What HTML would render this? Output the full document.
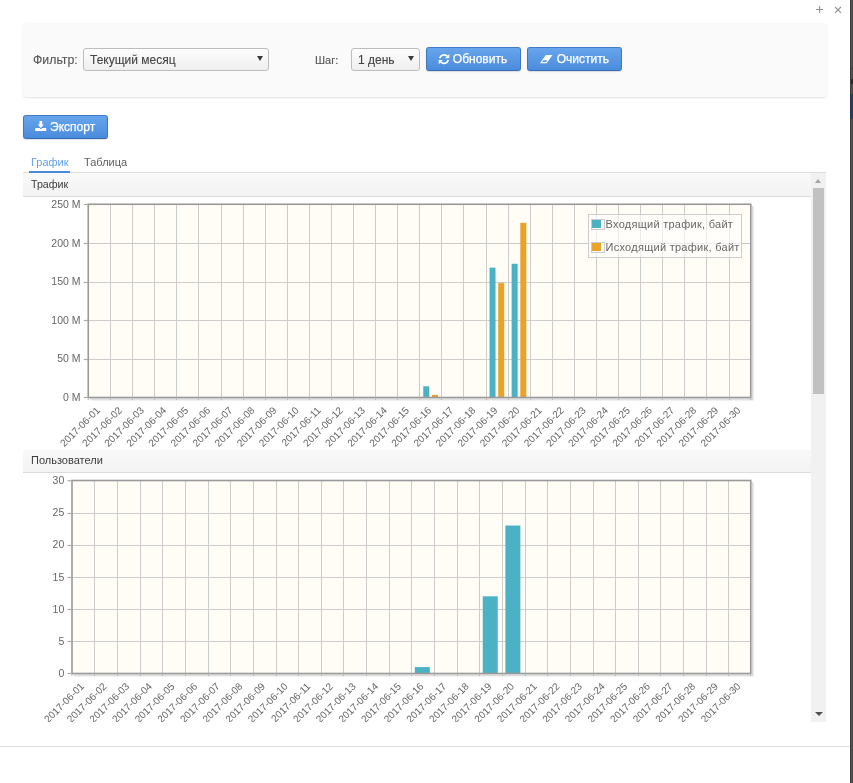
<!DOCTYPE html>
<html><head><meta charset="utf-8">
<style>
*{box-sizing:border-box;}
html,body{-webkit-font-smoothing:antialiased;margin:0;padding:0;width:853px;height:783px;overflow:hidden;background:#fff;font-family:"Liberation Sans",sans-serif;}
.abs{position:absolute;}
body>*{will-change:transform;}
#strip{position:absolute;left:850px;top:0;width:3px;height:783px;background:#4e4e4e;border-left:1px solid #3f3f3f;}
#strip2{position:absolute;left:850px;top:94px;width:3px;height:25px;background:#263c5a;}
#panel{position:absolute;left:23px;top:23px;width:804px;height:74px;background:#fafafa;border-radius:4px;box-shadow:0 1px 2px rgba(0,0,0,0.11);}
.lbl{position:absolute;font-size:12px;color:#555;white-space:nowrap;-webkit-text-stroke:0.12px #555;}
.sel{position:absolute;height:23px;border:1px solid #bdbdbd;border-radius:3px;background:linear-gradient(#fdfdfd,#efefef);font-size:12px;color:#444;}
.sel span{position:absolute;left:6px;top:4px;white-space:nowrap;-webkit-text-stroke:0.1px #444;}
.tri{position:absolute;width:0;height:0;border-left:3.2px solid transparent;border-right:3.2px solid transparent;border-top:5.2px solid #3a3a3a;}
.btn{position:absolute;height:24px;border:1px solid #3c7dd0;border-color:#3f7bc8 #3d76c2 #386cb6;border-radius:3px;background:linear-gradient(#67a6ec,#4a8bdc);color:#fff;font-size:12px;box-shadow:0 1px 1px rgba(0,0,0,0.12);}
.btn span{position:absolute;top:4px;white-space:nowrap;-webkit-text-stroke:0.25px #fff;}
.tab{position:absolute;font-size:11px;white-space:nowrap;}
.hdr{position:absolute;left:23px;width:788px;height:24px;background:linear-gradient(#f9f9f9,#f3f3f3);border-bottom:1px solid #dcdcdc;}
.hdr span{position:absolute;left:8px;top:5px;font-size:11px;color:#3c3c3c;white-space:nowrap;}
#strip3{position:absolute;left:850px;top:68px;width:3px;height:1px;background:#3d3d3d;}
#strip4{position:absolute;left:851px;top:79px;width:2px;height:5px;background:#2a2a2a;}
svg text{font-family:"Liberation Sans",sans-serif;}
</style></head><body>
<div id="strip"></div><div id="strip2"></div><div id="strip3"></div><div id="strip4"></div>
<svg class="abs" style="left:0;top:0" width="850" height="20">
<g stroke="#909090" stroke-width="1.05" fill="none">
<line x1="816" y1="9.5" x2="823.2" y2="9.5"/><line x1="819.6" y1="6" x2="819.6" y2="13"/>
<line x1="835" y1="7" x2="841" y2="12.8"/><line x1="841" y1="7" x2="835" y2="12.8"/>
</g></svg>
<div id="panel"></div>
<div class="lbl" style="left:33px;top:52.8px;font-size:12.3px;">Фильтр:</div>
<div class="sel" style="left:83px;top:48px;width:186px;"><span>Текущий месяц</span><div class="tri" style="left:173px;top:7.2px;"></div></div>
<div class="lbl" style="left:315px;top:54px;font-size:11px;">Шаг:</div>
<div class="sel" style="left:351px;top:48px;width:69px;"><span>1 день</span><div class="tri" style="left:56px;top:7.2px;"></div></div>
<div class="btn" style="left:426px;top:47px;width:95px;"><span style="left:25.8px">Обновить</span></div>
<div class="btn" style="left:527px;top:47px;width:95px;"><span style="left:28.7px">Очистить</span></div>
<div class="btn" style="left:23px;top:115px;width:85px;"><span style="left:26.1px">Экспорт</span></div>
<svg class="abs" style="left:0;top:0" width="853" height="140">
<g fill="none" stroke="#fff" stroke-width="1.7">
<path d="M439.7 58.2 A4.5 4.5 0 0 1 447.3 56.2"/>
<path d="M448.3 60.0 A4.5 4.5 0 0 1 440.7 62.0"/>
</g>
<g fill="#fff">
<polygon points="449.3,54 449.3,58.2 445.1,58.2"/>
<polygon points="438.7,64.2 438.7,60 442.9,60"/>
<polygon points="540,63.2 546.7,63.2 552.5,55 545.8,55"/>
<rect x="39.5" y="121" width="2.6" height="4"/>
<polygon points="37.7,124.4 43.9,124.4 40.8,128"/>
<path d="M35.2 128 H39.3 L40.8 129.3 L42.3 128 H46.2 V131 H35.2 Z"/>
</g>
<polygon points="542.2,62.0 546.1,62.0 547.3,60.3 543.4,60.3" fill="#5592e0"/>
</svg>
<div class="tab" style="left:31px;top:156px;color:#62a0e8;">График</div>
<div class="tab" style="left:84.2px;top:156px;color:#606060;">Таблица</div>
<div class="abs" style="left:23px;top:172px;width:803px;height:1px;background:#dddddd;"></div>
<div class="abs" style="left:29px;top:171px;width:41px;height:2px;background:#4a89dc;"></div>
<div class="abs" style="left:23px;top:173px;width:803px;height:549px;overflow:hidden;">
</div>
<div class="hdr" style="top:173px;"><span style="font-size:10.7px;top:5.3px">Трафик</span></div>
<div class="hdr" style="top:450px;height:23px;"><span style="top:3.6px">Пользователи</span></div>
<svg class="abs" style="left:0;top:0;" width="853" height="783">
<defs><clipPath id="cp"><rect x="23" y="173" width="788" height="549"/></clipPath></defs>
<g clip-path="url(#cp)">
<rect x="88.25" y="204.25" width="662.5" height="193.25" fill="#fffdf6"/>
<line x1="110.50" y1="204.25" x2="110.50" y2="397.5" stroke="#cccccc" stroke-width="1"/>
<line x1="132.50" y1="204.25" x2="132.50" y2="397.5" stroke="#cccccc" stroke-width="1"/>
<line x1="154.50" y1="204.25" x2="154.50" y2="397.5" stroke="#cccccc" stroke-width="1"/>
<line x1="176.50" y1="204.25" x2="176.50" y2="397.5" stroke="#cccccc" stroke-width="1"/>
<line x1="198.50" y1="204.25" x2="198.50" y2="397.5" stroke="#cccccc" stroke-width="1"/>
<line x1="221.50" y1="204.25" x2="221.50" y2="397.5" stroke="#cccccc" stroke-width="1"/>
<line x1="243.50" y1="204.25" x2="243.50" y2="397.5" stroke="#cccccc" stroke-width="1"/>
<line x1="265.50" y1="204.25" x2="265.50" y2="397.5" stroke="#cccccc" stroke-width="1"/>
<line x1="287.50" y1="204.25" x2="287.50" y2="397.5" stroke="#cccccc" stroke-width="1"/>
<line x1="309.50" y1="204.25" x2="309.50" y2="397.5" stroke="#cccccc" stroke-width="1"/>
<line x1="331.50" y1="204.25" x2="331.50" y2="397.5" stroke="#cccccc" stroke-width="1"/>
<line x1="353.50" y1="204.25" x2="353.50" y2="397.5" stroke="#cccccc" stroke-width="1"/>
<line x1="375.50" y1="204.25" x2="375.50" y2="397.5" stroke="#cccccc" stroke-width="1"/>
<line x1="397.50" y1="204.25" x2="397.50" y2="397.5" stroke="#cccccc" stroke-width="1"/>
<line x1="419.50" y1="204.25" x2="419.50" y2="397.5" stroke="#cccccc" stroke-width="1"/>
<line x1="441.50" y1="204.25" x2="441.50" y2="397.5" stroke="#cccccc" stroke-width="1"/>
<line x1="463.50" y1="204.25" x2="463.50" y2="397.5" stroke="#cccccc" stroke-width="1"/>
<line x1="486.50" y1="204.25" x2="486.50" y2="397.5" stroke="#cccccc" stroke-width="1"/>
<line x1="508.50" y1="204.25" x2="508.50" y2="397.5" stroke="#cccccc" stroke-width="1"/>
<line x1="530.50" y1="204.25" x2="530.50" y2="397.5" stroke="#cccccc" stroke-width="1"/>
<line x1="552.50" y1="204.25" x2="552.50" y2="397.5" stroke="#cccccc" stroke-width="1"/>
<line x1="574.50" y1="204.25" x2="574.50" y2="397.5" stroke="#cccccc" stroke-width="1"/>
<line x1="596.50" y1="204.25" x2="596.50" y2="397.5" stroke="#cccccc" stroke-width="1"/>
<line x1="618.50" y1="204.25" x2="618.50" y2="397.5" stroke="#cccccc" stroke-width="1"/>
<line x1="640.50" y1="204.25" x2="640.50" y2="397.5" stroke="#cccccc" stroke-width="1"/>
<line x1="662.50" y1="204.25" x2="662.50" y2="397.5" stroke="#cccccc" stroke-width="1"/>
<line x1="684.50" y1="204.25" x2="684.50" y2="397.5" stroke="#cccccc" stroke-width="1"/>
<line x1="706.50" y1="204.25" x2="706.50" y2="397.5" stroke="#cccccc" stroke-width="1"/>
<line x1="729.50" y1="204.25" x2="729.50" y2="397.5" stroke="#cccccc" stroke-width="1"/>
<line x1="88.25" y1="243.50" x2="750.75" y2="243.50" stroke="#cccccc" stroke-width="1"/>
<line x1="88.25" y1="282.50" x2="750.75" y2="282.50" stroke="#cccccc" stroke-width="1"/>
<line x1="88.25" y1="320.50" x2="750.75" y2="320.50" stroke="#cccccc" stroke-width="1"/>
<line x1="88.25" y1="359.50" x2="750.75" y2="359.50" stroke="#cccccc" stroke-width="1"/>
<rect x="423.26" y="386.29" width="6" height="11.21" fill="#4bb2c5"/>
<rect x="431.96" y="394.87" width="6" height="2.63" fill="#eaa228"/>
<rect x="489.53" y="267.64" width="6" height="129.86" fill="#4bb2c5"/>
<rect x="498.23" y="283.10" width="6" height="114.40" fill="#eaa228"/>
<rect x="511.62" y="263.77" width="6" height="133.73" fill="#4bb2c5"/>
<rect x="520.32" y="222.80" width="6" height="174.70" fill="#eaa228"/>
<polyline points="89.35,398.6 751.85,398.6 751.85,205.35" fill="none" stroke="rgba(0,0,0,0.07)" stroke-width="1.5"/>
<polyline points="90.05,399.3 752.55,399.3 752.55,206.05" fill="none" stroke="rgba(0,0,0,0.07)" stroke-width="1.5"/>
<polyline points="90.75,400.0 753.25,400.0 753.25,206.75" fill="none" stroke="rgba(0,0,0,0.07)" stroke-width="1.5"/>
<rect x="88.25" y="204.25" width="662.5" height="193.25" fill="none" stroke="#999999" stroke-width="1.6"/>
<line x1="83.75" y1="204.50" x2="88.25" y2="204.50" stroke="#aaaaaa" stroke-width="1.2"/>
<line x1="83.75" y1="243.50" x2="88.25" y2="243.50" stroke="#aaaaaa" stroke-width="1.2"/>
<line x1="83.75" y1="282.50" x2="88.25" y2="282.50" stroke="#aaaaaa" stroke-width="1.2"/>
<line x1="83.75" y1="320.50" x2="88.25" y2="320.50" stroke="#aaaaaa" stroke-width="1.2"/>
<line x1="83.75" y1="359.50" x2="88.25" y2="359.50" stroke="#aaaaaa" stroke-width="1.2"/>
<line x1="83.75" y1="397.50" x2="88.25" y2="397.50" stroke="#aaaaaa" stroke-width="1.2"/>
<line x1="88.25" y1="397.5" x2="88.25" y2="400.1" stroke="#bbbbbb" stroke-width="1"/>
<line x1="110.50" y1="397.5" x2="110.50" y2="400.1" stroke="#bbbbbb" stroke-width="1"/>
<line x1="132.50" y1="397.5" x2="132.50" y2="400.1" stroke="#bbbbbb" stroke-width="1"/>
<line x1="154.50" y1="397.5" x2="154.50" y2="400.1" stroke="#bbbbbb" stroke-width="1"/>
<line x1="176.50" y1="397.5" x2="176.50" y2="400.1" stroke="#bbbbbb" stroke-width="1"/>
<line x1="198.50" y1="397.5" x2="198.50" y2="400.1" stroke="#bbbbbb" stroke-width="1"/>
<line x1="221.50" y1="397.5" x2="221.50" y2="400.1" stroke="#bbbbbb" stroke-width="1"/>
<line x1="243.50" y1="397.5" x2="243.50" y2="400.1" stroke="#bbbbbb" stroke-width="1"/>
<line x1="265.50" y1="397.5" x2="265.50" y2="400.1" stroke="#bbbbbb" stroke-width="1"/>
<line x1="287.50" y1="397.5" x2="287.50" y2="400.1" stroke="#bbbbbb" stroke-width="1"/>
<line x1="309.50" y1="397.5" x2="309.50" y2="400.1" stroke="#bbbbbb" stroke-width="1"/>
<line x1="331.50" y1="397.5" x2="331.50" y2="400.1" stroke="#bbbbbb" stroke-width="1"/>
<line x1="353.50" y1="397.5" x2="353.50" y2="400.1" stroke="#bbbbbb" stroke-width="1"/>
<line x1="375.50" y1="397.5" x2="375.50" y2="400.1" stroke="#bbbbbb" stroke-width="1"/>
<line x1="397.50" y1="397.5" x2="397.50" y2="400.1" stroke="#bbbbbb" stroke-width="1"/>
<line x1="419.50" y1="397.5" x2="419.50" y2="400.1" stroke="#bbbbbb" stroke-width="1"/>
<line x1="441.50" y1="397.5" x2="441.50" y2="400.1" stroke="#bbbbbb" stroke-width="1"/>
<line x1="463.50" y1="397.5" x2="463.50" y2="400.1" stroke="#bbbbbb" stroke-width="1"/>
<line x1="486.50" y1="397.5" x2="486.50" y2="400.1" stroke="#bbbbbb" stroke-width="1"/>
<line x1="508.50" y1="397.5" x2="508.50" y2="400.1" stroke="#bbbbbb" stroke-width="1"/>
<line x1="530.50" y1="397.5" x2="530.50" y2="400.1" stroke="#bbbbbb" stroke-width="1"/>
<line x1="552.50" y1="397.5" x2="552.50" y2="400.1" stroke="#bbbbbb" stroke-width="1"/>
<line x1="574.50" y1="397.5" x2="574.50" y2="400.1" stroke="#bbbbbb" stroke-width="1"/>
<line x1="596.50" y1="397.5" x2="596.50" y2="400.1" stroke="#bbbbbb" stroke-width="1"/>
<line x1="618.50" y1="397.5" x2="618.50" y2="400.1" stroke="#bbbbbb" stroke-width="1"/>
<line x1="640.50" y1="397.5" x2="640.50" y2="400.1" stroke="#bbbbbb" stroke-width="1"/>
<line x1="662.50" y1="397.5" x2="662.50" y2="400.1" stroke="#bbbbbb" stroke-width="1"/>
<line x1="684.50" y1="397.5" x2="684.50" y2="400.1" stroke="#bbbbbb" stroke-width="1"/>
<line x1="706.50" y1="397.5" x2="706.50" y2="400.1" stroke="#bbbbbb" stroke-width="1"/>
<line x1="729.50" y1="397.5" x2="729.50" y2="400.1" stroke="#bbbbbb" stroke-width="1"/>
<line x1="750.75" y1="397.5" x2="750.75" y2="400.1" stroke="#bbbbbb" stroke-width="1"/>
<text x="80.55" y="401.10" text-anchor="end" font-size="10.5" fill="#666666">0 M</text>
<text x="80.55" y="362.45" text-anchor="end" font-size="10.5" fill="#666666">50 M</text>
<text x="80.55" y="323.80" text-anchor="end" font-size="10.5" fill="#666666">100 M</text>
<text x="80.55" y="285.15" text-anchor="end" font-size="10.5" fill="#666666">150 M</text>
<text x="80.55" y="246.50" text-anchor="end" font-size="10.5" fill="#666666">200 M</text>
<text x="80.55" y="207.85" text-anchor="end" font-size="10.5" fill="#666666">250 M</text>
<text transform="translate(95.64,406.00) rotate(-45)" x="0" y="7" text-anchor="end" font-size="10.05" fill="#666666">2017-06-01</text>
<text transform="translate(117.73,406.00) rotate(-45)" x="0" y="7" text-anchor="end" font-size="10.05" fill="#666666">2017-06-02</text>
<text transform="translate(139.82,406.00) rotate(-45)" x="0" y="7" text-anchor="end" font-size="10.05" fill="#666666">2017-06-03</text>
<text transform="translate(161.91,406.00) rotate(-45)" x="0" y="7" text-anchor="end" font-size="10.05" fill="#666666">2017-06-04</text>
<text transform="translate(184.00,406.00) rotate(-45)" x="0" y="7" text-anchor="end" font-size="10.05" fill="#666666">2017-06-05</text>
<text transform="translate(206.08,406.00) rotate(-45)" x="0" y="7" text-anchor="end" font-size="10.05" fill="#666666">2017-06-06</text>
<text transform="translate(228.17,406.00) rotate(-45)" x="0" y="7" text-anchor="end" font-size="10.05" fill="#666666">2017-06-07</text>
<text transform="translate(250.26,406.00) rotate(-45)" x="0" y="7" text-anchor="end" font-size="10.05" fill="#666666">2017-06-08</text>
<text transform="translate(272.35,406.00) rotate(-45)" x="0" y="7" text-anchor="end" font-size="10.05" fill="#666666">2017-06-09</text>
<text transform="translate(294.44,406.00) rotate(-45)" x="0" y="7" text-anchor="end" font-size="10.05" fill="#666666">2017-06-10</text>
<text transform="translate(316.52,406.00) rotate(-45)" x="0" y="7" text-anchor="end" font-size="10.05" fill="#666666">2017-06-11</text>
<text transform="translate(338.61,406.00) rotate(-45)" x="0" y="7" text-anchor="end" font-size="10.05" fill="#666666">2017-06-12</text>
<text transform="translate(360.70,406.00) rotate(-45)" x="0" y="7" text-anchor="end" font-size="10.05" fill="#666666">2017-06-13</text>
<text transform="translate(382.79,406.00) rotate(-45)" x="0" y="7" text-anchor="end" font-size="10.05" fill="#666666">2017-06-14</text>
<text transform="translate(404.88,406.00) rotate(-45)" x="0" y="7" text-anchor="end" font-size="10.05" fill="#666666">2017-06-15</text>
<text transform="translate(426.96,406.00) rotate(-45)" x="0" y="7" text-anchor="end" font-size="10.05" fill="#666666">2017-06-16</text>
<text transform="translate(449.05,406.00) rotate(-45)" x="0" y="7" text-anchor="end" font-size="10.05" fill="#666666">2017-06-17</text>
<text transform="translate(471.14,406.00) rotate(-45)" x="0" y="7" text-anchor="end" font-size="10.05" fill="#666666">2017-06-18</text>
<text transform="translate(493.23,406.00) rotate(-45)" x="0" y="7" text-anchor="end" font-size="10.05" fill="#666666">2017-06-19</text>
<text transform="translate(515.32,406.00) rotate(-45)" x="0" y="7" text-anchor="end" font-size="10.05" fill="#666666">2017-06-20</text>
<text transform="translate(537.40,406.00) rotate(-45)" x="0" y="7" text-anchor="end" font-size="10.05" fill="#666666">2017-06-21</text>
<text transform="translate(559.49,406.00) rotate(-45)" x="0" y="7" text-anchor="end" font-size="10.05" fill="#666666">2017-06-22</text>
<text transform="translate(581.58,406.00) rotate(-45)" x="0" y="7" text-anchor="end" font-size="10.05" fill="#666666">2017-06-23</text>
<text transform="translate(603.67,406.00) rotate(-45)" x="0" y="7" text-anchor="end" font-size="10.05" fill="#666666">2017-06-24</text>
<text transform="translate(625.76,406.00) rotate(-45)" x="0" y="7" text-anchor="end" font-size="10.05" fill="#666666">2017-06-25</text>
<text transform="translate(647.84,406.00) rotate(-45)" x="0" y="7" text-anchor="end" font-size="10.05" fill="#666666">2017-06-26</text>
<text transform="translate(669.93,406.00) rotate(-45)" x="0" y="7" text-anchor="end" font-size="10.05" fill="#666666">2017-06-27</text>
<text transform="translate(692.02,406.00) rotate(-45)" x="0" y="7" text-anchor="end" font-size="10.05" fill="#666666">2017-06-28</text>
<text transform="translate(714.11,406.00) rotate(-45)" x="0" y="7" text-anchor="end" font-size="10.05" fill="#666666">2017-06-29</text>
<text transform="translate(736.20,406.00) rotate(-45)" x="0" y="7" text-anchor="end" font-size="10.05" fill="#666666">2017-06-30</text>
<rect x="72.0" y="480.5" width="678.75" height="193.0" fill="#fffdf6"/>
<line x1="94.50" y1="480.5" x2="94.50" y2="673.5" stroke="#cccccc" stroke-width="1"/>
<line x1="117.50" y1="480.5" x2="117.50" y2="673.5" stroke="#cccccc" stroke-width="1"/>
<line x1="140.50" y1="480.5" x2="140.50" y2="673.5" stroke="#cccccc" stroke-width="1"/>
<line x1="162.50" y1="480.5" x2="162.50" y2="673.5" stroke="#cccccc" stroke-width="1"/>
<line x1="185.50" y1="480.5" x2="185.50" y2="673.5" stroke="#cccccc" stroke-width="1"/>
<line x1="208.50" y1="480.5" x2="208.50" y2="673.5" stroke="#cccccc" stroke-width="1"/>
<line x1="230.50" y1="480.5" x2="230.50" y2="673.5" stroke="#cccccc" stroke-width="1"/>
<line x1="253.50" y1="480.5" x2="253.50" y2="673.5" stroke="#cccccc" stroke-width="1"/>
<line x1="276.50" y1="480.5" x2="276.50" y2="673.5" stroke="#cccccc" stroke-width="1"/>
<line x1="298.50" y1="480.5" x2="298.50" y2="673.5" stroke="#cccccc" stroke-width="1"/>
<line x1="321.50" y1="480.5" x2="321.50" y2="673.5" stroke="#cccccc" stroke-width="1"/>
<line x1="343.50" y1="480.5" x2="343.50" y2="673.5" stroke="#cccccc" stroke-width="1"/>
<line x1="366.50" y1="480.5" x2="366.50" y2="673.5" stroke="#cccccc" stroke-width="1"/>
<line x1="389.50" y1="480.5" x2="389.50" y2="673.5" stroke="#cccccc" stroke-width="1"/>
<line x1="411.50" y1="480.5" x2="411.50" y2="673.5" stroke="#cccccc" stroke-width="1"/>
<line x1="434.50" y1="480.5" x2="434.50" y2="673.5" stroke="#cccccc" stroke-width="1"/>
<line x1="457.50" y1="480.5" x2="457.50" y2="673.5" stroke="#cccccc" stroke-width="1"/>
<line x1="479.50" y1="480.5" x2="479.50" y2="673.5" stroke="#cccccc" stroke-width="1"/>
<line x1="502.50" y1="480.5" x2="502.50" y2="673.5" stroke="#cccccc" stroke-width="1"/>
<line x1="525.50" y1="480.5" x2="525.50" y2="673.5" stroke="#cccccc" stroke-width="1"/>
<line x1="547.50" y1="480.5" x2="547.50" y2="673.5" stroke="#cccccc" stroke-width="1"/>
<line x1="570.50" y1="480.5" x2="570.50" y2="673.5" stroke="#cccccc" stroke-width="1"/>
<line x1="593.50" y1="480.5" x2="593.50" y2="673.5" stroke="#cccccc" stroke-width="1"/>
<line x1="615.50" y1="480.5" x2="615.50" y2="673.5" stroke="#cccccc" stroke-width="1"/>
<line x1="638.50" y1="480.5" x2="638.50" y2="673.5" stroke="#cccccc" stroke-width="1"/>
<line x1="660.50" y1="480.5" x2="660.50" y2="673.5" stroke="#cccccc" stroke-width="1"/>
<line x1="683.50" y1="480.5" x2="683.50" y2="673.5" stroke="#cccccc" stroke-width="1"/>
<line x1="706.50" y1="480.5" x2="706.50" y2="673.5" stroke="#cccccc" stroke-width="1"/>
<line x1="728.50" y1="480.5" x2="728.50" y2="673.5" stroke="#cccccc" stroke-width="1"/>
<line x1="72.0" y1="513.50" x2="750.75" y2="513.50" stroke="#cccccc" stroke-width="1"/>
<line x1="72.0" y1="545.50" x2="750.75" y2="545.50" stroke="#cccccc" stroke-width="1"/>
<line x1="72.0" y1="577.50" x2="750.75" y2="577.50" stroke="#cccccc" stroke-width="1"/>
<line x1="72.0" y1="609.50" x2="750.75" y2="609.50" stroke="#cccccc" stroke-width="1"/>
<line x1="72.0" y1="641.50" x2="750.75" y2="641.50" stroke="#cccccc" stroke-width="1"/>
<rect x="414.82" y="667.07" width="15" height="6.43" fill="#4bb2c5"/>
<rect x="482.74" y="596.30" width="15" height="77.20" fill="#4bb2c5"/>
<rect x="505.38" y="525.53" width="15" height="147.97" fill="#4bb2c5"/>
<polyline points="73.1,674.6 751.85,674.6 751.85,481.6" fill="none" stroke="rgba(0,0,0,0.07)" stroke-width="1.5"/>
<polyline points="73.8,675.3 752.55,675.3 752.55,482.3" fill="none" stroke="rgba(0,0,0,0.07)" stroke-width="1.5"/>
<polyline points="74.5,676.0 753.25,676.0 753.25,483.0" fill="none" stroke="rgba(0,0,0,0.07)" stroke-width="1.5"/>
<rect x="72.0" y="480.5" width="678.75" height="193.0" fill="none" stroke="#999999" stroke-width="1.6"/>
<line x1="67.5" y1="480.75" x2="72.0" y2="480.75" stroke="#aaaaaa" stroke-width="1.2"/>
<line x1="67.5" y1="513.50" x2="72.0" y2="513.50" stroke="#aaaaaa" stroke-width="1.2"/>
<line x1="67.5" y1="545.50" x2="72.0" y2="545.50" stroke="#aaaaaa" stroke-width="1.2"/>
<line x1="67.5" y1="577.50" x2="72.0" y2="577.50" stroke="#aaaaaa" stroke-width="1.2"/>
<line x1="67.5" y1="609.50" x2="72.0" y2="609.50" stroke="#aaaaaa" stroke-width="1.2"/>
<line x1="67.5" y1="641.50" x2="72.0" y2="641.50" stroke="#aaaaaa" stroke-width="1.2"/>
<line x1="67.5" y1="673.50" x2="72.0" y2="673.50" stroke="#aaaaaa" stroke-width="1.2"/>
<line x1="72.00" y1="673.5" x2="72.00" y2="676.1" stroke="#bbbbbb" stroke-width="1"/>
<line x1="94.50" y1="673.5" x2="94.50" y2="676.1" stroke="#bbbbbb" stroke-width="1"/>
<line x1="117.50" y1="673.5" x2="117.50" y2="676.1" stroke="#bbbbbb" stroke-width="1"/>
<line x1="140.50" y1="673.5" x2="140.50" y2="676.1" stroke="#bbbbbb" stroke-width="1"/>
<line x1="162.50" y1="673.5" x2="162.50" y2="676.1" stroke="#bbbbbb" stroke-width="1"/>
<line x1="185.50" y1="673.5" x2="185.50" y2="676.1" stroke="#bbbbbb" stroke-width="1"/>
<line x1="208.50" y1="673.5" x2="208.50" y2="676.1" stroke="#bbbbbb" stroke-width="1"/>
<line x1="230.50" y1="673.5" x2="230.50" y2="676.1" stroke="#bbbbbb" stroke-width="1"/>
<line x1="253.50" y1="673.5" x2="253.50" y2="676.1" stroke="#bbbbbb" stroke-width="1"/>
<line x1="276.50" y1="673.5" x2="276.50" y2="676.1" stroke="#bbbbbb" stroke-width="1"/>
<line x1="298.50" y1="673.5" x2="298.50" y2="676.1" stroke="#bbbbbb" stroke-width="1"/>
<line x1="321.50" y1="673.5" x2="321.50" y2="676.1" stroke="#bbbbbb" stroke-width="1"/>
<line x1="343.50" y1="673.5" x2="343.50" y2="676.1" stroke="#bbbbbb" stroke-width="1"/>
<line x1="366.50" y1="673.5" x2="366.50" y2="676.1" stroke="#bbbbbb" stroke-width="1"/>
<line x1="389.50" y1="673.5" x2="389.50" y2="676.1" stroke="#bbbbbb" stroke-width="1"/>
<line x1="411.50" y1="673.5" x2="411.50" y2="676.1" stroke="#bbbbbb" stroke-width="1"/>
<line x1="434.50" y1="673.5" x2="434.50" y2="676.1" stroke="#bbbbbb" stroke-width="1"/>
<line x1="457.50" y1="673.5" x2="457.50" y2="676.1" stroke="#bbbbbb" stroke-width="1"/>
<line x1="479.50" y1="673.5" x2="479.50" y2="676.1" stroke="#bbbbbb" stroke-width="1"/>
<line x1="502.50" y1="673.5" x2="502.50" y2="676.1" stroke="#bbbbbb" stroke-width="1"/>
<line x1="525.50" y1="673.5" x2="525.50" y2="676.1" stroke="#bbbbbb" stroke-width="1"/>
<line x1="547.50" y1="673.5" x2="547.50" y2="676.1" stroke="#bbbbbb" stroke-width="1"/>
<line x1="570.50" y1="673.5" x2="570.50" y2="676.1" stroke="#bbbbbb" stroke-width="1"/>
<line x1="593.50" y1="673.5" x2="593.50" y2="676.1" stroke="#bbbbbb" stroke-width="1"/>
<line x1="615.50" y1="673.5" x2="615.50" y2="676.1" stroke="#bbbbbb" stroke-width="1"/>
<line x1="638.50" y1="673.5" x2="638.50" y2="676.1" stroke="#bbbbbb" stroke-width="1"/>
<line x1="660.50" y1="673.5" x2="660.50" y2="676.1" stroke="#bbbbbb" stroke-width="1"/>
<line x1="683.50" y1="673.5" x2="683.50" y2="676.1" stroke="#bbbbbb" stroke-width="1"/>
<line x1="706.50" y1="673.5" x2="706.50" y2="676.1" stroke="#bbbbbb" stroke-width="1"/>
<line x1="728.50" y1="673.5" x2="728.50" y2="676.1" stroke="#bbbbbb" stroke-width="1"/>
<line x1="750.75" y1="673.5" x2="750.75" y2="676.1" stroke="#bbbbbb" stroke-width="1"/>
<text x="64.3" y="677.10" text-anchor="end" font-size="10.5" fill="#666666">0</text>
<text x="64.3" y="644.93" text-anchor="end" font-size="10.5" fill="#666666">5</text>
<text x="64.3" y="612.77" text-anchor="end" font-size="10.5" fill="#666666">10</text>
<text x="64.3" y="580.60" text-anchor="end" font-size="10.5" fill="#666666">15</text>
<text x="64.3" y="548.43" text-anchor="end" font-size="10.5" fill="#666666">20</text>
<text x="64.3" y="516.27" text-anchor="end" font-size="10.5" fill="#666666">25</text>
<text x="64.3" y="484.10" text-anchor="end" font-size="10.5" fill="#666666">30</text>
<text transform="translate(79.72,682.00) rotate(-45)" x="0" y="7" text-anchor="end" font-size="10.05" fill="#666666">2017-06-01</text>
<text transform="translate(102.36,682.00) rotate(-45)" x="0" y="7" text-anchor="end" font-size="10.05" fill="#666666">2017-06-02</text>
<text transform="translate(125.00,682.00) rotate(-45)" x="0" y="7" text-anchor="end" font-size="10.05" fill="#666666">2017-06-03</text>
<text transform="translate(147.64,682.00) rotate(-45)" x="0" y="7" text-anchor="end" font-size="10.05" fill="#666666">2017-06-04</text>
<text transform="translate(170.28,682.00) rotate(-45)" x="0" y="7" text-anchor="end" font-size="10.05" fill="#666666">2017-06-05</text>
<text transform="translate(192.92,682.00) rotate(-45)" x="0" y="7" text-anchor="end" font-size="10.05" fill="#666666">2017-06-06</text>
<text transform="translate(215.56,682.00) rotate(-45)" x="0" y="7" text-anchor="end" font-size="10.05" fill="#666666">2017-06-07</text>
<text transform="translate(238.20,682.00) rotate(-45)" x="0" y="7" text-anchor="end" font-size="10.05" fill="#666666">2017-06-08</text>
<text transform="translate(260.84,682.00) rotate(-45)" x="0" y="7" text-anchor="end" font-size="10.05" fill="#666666">2017-06-09</text>
<text transform="translate(283.48,682.00) rotate(-45)" x="0" y="7" text-anchor="end" font-size="10.05" fill="#666666">2017-06-10</text>
<text transform="translate(306.12,682.00) rotate(-45)" x="0" y="7" text-anchor="end" font-size="10.05" fill="#666666">2017-06-11</text>
<text transform="translate(328.76,682.00) rotate(-45)" x="0" y="7" text-anchor="end" font-size="10.05" fill="#666666">2017-06-12</text>
<text transform="translate(351.40,682.00) rotate(-45)" x="0" y="7" text-anchor="end" font-size="10.05" fill="#666666">2017-06-13</text>
<text transform="translate(374.04,682.00) rotate(-45)" x="0" y="7" text-anchor="end" font-size="10.05" fill="#666666">2017-06-14</text>
<text transform="translate(396.68,682.00) rotate(-45)" x="0" y="7" text-anchor="end" font-size="10.05" fill="#666666">2017-06-15</text>
<text transform="translate(419.32,682.00) rotate(-45)" x="0" y="7" text-anchor="end" font-size="10.05" fill="#666666">2017-06-16</text>
<text transform="translate(441.96,682.00) rotate(-45)" x="0" y="7" text-anchor="end" font-size="10.05" fill="#666666">2017-06-17</text>
<text transform="translate(464.60,682.00) rotate(-45)" x="0" y="7" text-anchor="end" font-size="10.05" fill="#666666">2017-06-18</text>
<text transform="translate(487.24,682.00) rotate(-45)" x="0" y="7" text-anchor="end" font-size="10.05" fill="#666666">2017-06-19</text>
<text transform="translate(509.88,682.00) rotate(-45)" x="0" y="7" text-anchor="end" font-size="10.05" fill="#666666">2017-06-20</text>
<text transform="translate(532.52,682.00) rotate(-45)" x="0" y="7" text-anchor="end" font-size="10.05" fill="#666666">2017-06-21</text>
<text transform="translate(555.16,682.00) rotate(-45)" x="0" y="7" text-anchor="end" font-size="10.05" fill="#666666">2017-06-22</text>
<text transform="translate(577.80,682.00) rotate(-45)" x="0" y="7" text-anchor="end" font-size="10.05" fill="#666666">2017-06-23</text>
<text transform="translate(600.44,682.00) rotate(-45)" x="0" y="7" text-anchor="end" font-size="10.05" fill="#666666">2017-06-24</text>
<text transform="translate(623.08,682.00) rotate(-45)" x="0" y="7" text-anchor="end" font-size="10.05" fill="#666666">2017-06-25</text>
<text transform="translate(645.72,682.00) rotate(-45)" x="0" y="7" text-anchor="end" font-size="10.05" fill="#666666">2017-06-26</text>
<text transform="translate(668.36,682.00) rotate(-45)" x="0" y="7" text-anchor="end" font-size="10.05" fill="#666666">2017-06-27</text>
<text transform="translate(691.00,682.00) rotate(-45)" x="0" y="7" text-anchor="end" font-size="10.05" fill="#666666">2017-06-28</text>
<text transform="translate(713.64,682.00) rotate(-45)" x="0" y="7" text-anchor="end" font-size="10.05" fill="#666666">2017-06-29</text>
<text transform="translate(736.28,682.00) rotate(-45)" x="0" y="7" text-anchor="end" font-size="10.05" fill="#666666">2017-06-30</text>
</g>
<!-- legend -->
<rect x="588.5" y="214.5" width="153" height="43" fill="rgba(255,255,255,0.6)" stroke="#cccccc" stroke-width="1"/>
<rect x="591.5" y="219.5" width="13" height="10" fill="#fff" stroke="#cccccc" stroke-width="1"/>
<rect x="592" y="220" width="9" height="8" fill="#4bb2c5"/>
<rect x="591.5" y="242.5" width="13" height="10" fill="#fff" stroke="#cccccc" stroke-width="1"/>
<rect x="592" y="243" width="9" height="8" fill="#eaa228"/>
<text x="605.5" y="227.8" font-size="11" letter-spacing="0.27" fill="#666">Входящий трафик, байт</text>
<text x="605.5" y="250.8" font-size="11" letter-spacing="0.27" fill="#666">Исходящий трафик, байт</text>
</svg>
<!-- scrollbar -->
<div class="abs" style="left:811px;top:173px;width:15px;height:549px;background:#f1f1f1;"></div>
<div class="abs" style="left:813px;top:188px;width:11px;height:206px;background:#c1c1c1;"></div>
<div class="abs" style="left:815px;top:179px;width:0;height:0;border-left:3.75px solid transparent;border-right:3.75px solid transparent;border-bottom:4.2px solid #a3a3a3;"></div>
<div class="abs" style="left:814.5px;top:711.5px;width:0;height:0;border-left:4px solid transparent;border-right:4px solid transparent;border-top:4.6px solid #505050;"></div>
<div class="abs" style="left:0;top:746px;width:850px;height:1px;background:#dedede;"></div>
</body></html>
